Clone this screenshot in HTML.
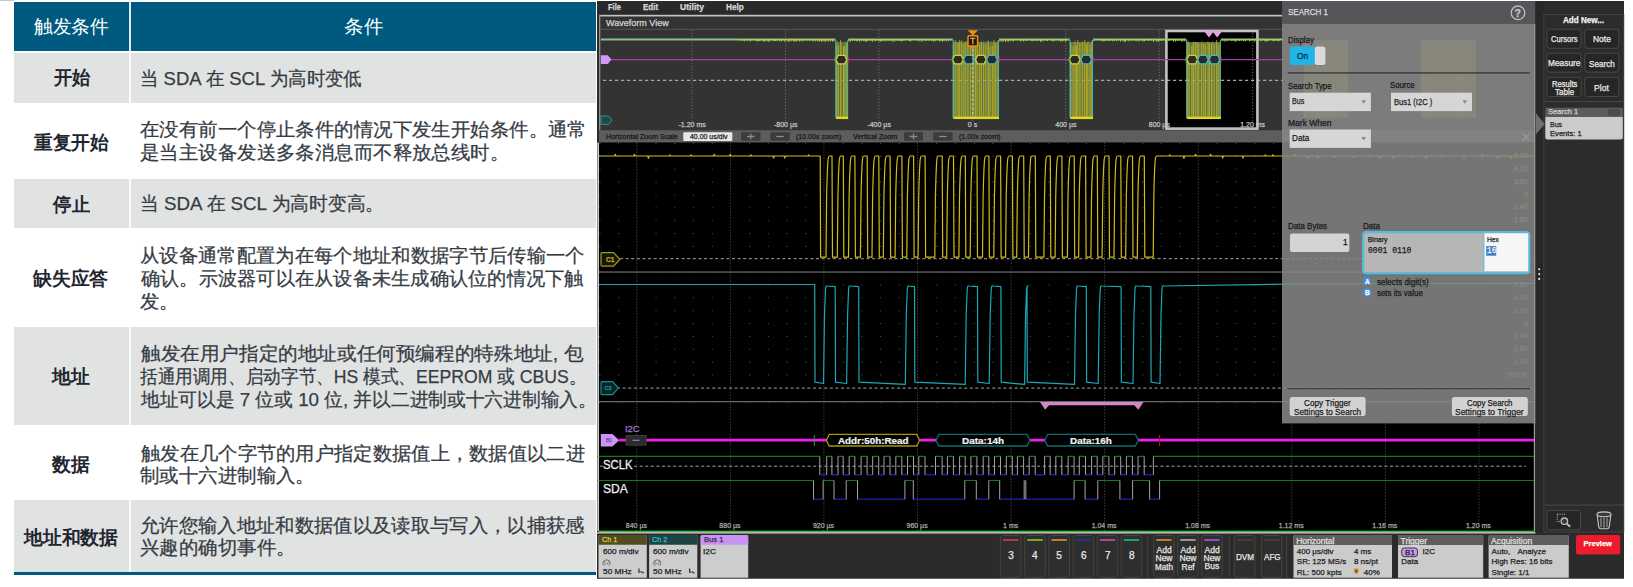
<!DOCTYPE html><html><head><meta charset="utf-8"><style>
body{margin:0;width:1633px;height:587px;overflow:hidden;background:#fff;position:relative;font-family:'Liberation Sans',sans-serif}
.a{position:absolute}
.t{position:absolute;white-space:nowrap;line-height:1;transform-origin:0 0}
.k{-webkit-text-stroke:0.25px currentColor}
svg{position:absolute;left:0;top:0}
</style></head><body>
<div class="a" style="left:0;top:0;width:13.6px;height:1px;background:#c8c8c8"></div>
<div class="a" style="left:14.4px;top:2.4px;width:581.6px;height:49.1px;background:#005a80"></div>
<div class="a" style="left:129.3px;top:2.4px;width:1.8px;height:49.1px;background:#dfe8ee"></div>
<div class="a" style="left:14.4px;top:52.5px;width:581.6px;height:50.5px;background:#e1e2e2"></div>
<div class="a" style="left:129.3px;top:52.5px;width:1.8px;height:50.5px;background:#fbfbfb"></div>
<div class="a" style="left:14.4px;top:103px;width:581.6px;height:75.6px;background:#ffffff"></div>
<div class="a" style="left:14.4px;top:178.6px;width:581.6px;height:49.400000000000006px;background:#e1e2e2"></div>
<div class="a" style="left:129.3px;top:178.6px;width:1.8px;height:49.400000000000006px;background:#fbfbfb"></div>
<div class="a" style="left:14.4px;top:228px;width:581.6px;height:99px;background:#ffffff"></div>
<div class="a" style="left:14.4px;top:327px;width:581.6px;height:98px;background:#e1e2e2"></div>
<div class="a" style="left:129.3px;top:327px;width:1.8px;height:98px;background:#fbfbfb"></div>
<div class="a" style="left:14.4px;top:425px;width:581.6px;height:75px;background:#ffffff"></div>
<div class="a" style="left:14.4px;top:500px;width:581.6px;height:71.5px;background:#e1e2e2"></div>
<div class="a" style="left:129.3px;top:500px;width:1.8px;height:71.5px;background:#fbfbfb"></div>
<div class="a" style="left:14px;top:571.5px;width:582px;height:3.6px;background:#005a80"></div>
<div class="t" style="left:139.66px;top:69.00px;font-size:19px;color:#363c44;-webkit-text-stroke:0.25px #363c44;transform:scaleX(0.9716)">当 SDA 在 SCL 为高时变低</div>
<div class="t" style="left:140.28px;top:120.40px;font-size:19px;color:#363c44;-webkit-text-stroke:0.25px #363c44;transform:scaleX(1.0224)">在没有前一个停止条件的情况下发生开始条件。通常</div>
<div class="t" style="left:140.28px;top:143.40px;font-size:19px;color:#363c44;-webkit-text-stroke:0.25px #363c44;transform:scaleX(1.0224)">是当主设备发送多条消息而不释放总线时。</div>
<div class="t" style="left:139.63px;top:193.90px;font-size:19px;color:#363c44;-webkit-text-stroke:0.25px #363c44;transform:scaleX(0.9862)">当 SDA 在 SCL 为高时变高。</div>
<div class="t" style="left:140.28px;top:245.90px;font-size:19px;color:#363c44;-webkit-text-stroke:0.25px #363c44;transform:scaleX(1.0177)">从设备通常配置为在每个地址和数据字节后传输一个</div>
<div class="t" style="left:141.30px;top:268.70px;font-size:19px;color:#363c44;-webkit-text-stroke:0.25px #363c44;transform:scaleX(1.0130)">确认。示波器可以在从设备未生成确认位的情况下触</div>
<div class="t" style="left:140.28px;top:291.60px;font-size:19px;color:#363c44;-webkit-text-stroke:0.25px #363c44;transform:scaleX(1.0224)">发。</div>
<div class="t" style="left:141.30px;top:343.80px;font-size:19px;color:#363c44;-webkit-text-stroke:0.25px #363c44;transform:scaleX(1.0319)">触发在用户指定的地址或任何预编程的特殊地址, 包</div>
<div class="t" style="left:140.37px;top:367.00px;font-size:19px;color:#363c44;-webkit-text-stroke:0.25px #363c44;transform:scaleX(0.9274)">括通用调用、启动字节、HS 模式、EEPROM 或 CBUS。</div>
<div class="t" style="left:141.30px;top:389.80px;font-size:19px;color:#363c44;-webkit-text-stroke:0.25px #363c44;transform:scaleX(0.9860)">地址可以是 7 位或 10 位, 并以二进制或十六进制输入。</div>
<div class="t" style="left:141.30px;top:443.60px;font-size:19px;color:#363c44;-webkit-text-stroke:0.25px #363c44;transform:scaleX(1.0158)">触发在几个字节的用户指定数据值上，数据值以二进</div>
<div class="t" style="left:140.28px;top:465.60px;font-size:19px;color:#363c44;-webkit-text-stroke:0.25px #363c44;transform:scaleX(1.0224)">制或十六进制输入。</div>
<div class="t" style="left:140.28px;top:515.90px;font-size:19px;color:#363c44;-webkit-text-stroke:0.25px #363c44;transform:scaleX(1.0177)">允许您输入地址和数据值以及读取与写入，以捕获感</div>
<div class="t" style="left:140.28px;top:538.20px;font-size:19px;color:#363c44;-webkit-text-stroke:0.25px #363c44;transform:scaleX(1.0224)">兴趣的确切事件。</div>
<div class="t" style="left:34.30px;top:17.40px;font-size:19px;font-weight:normal;color:#ffffff;transform:scaleX(0.9867)">触发条件</div>
<div class="t" style="left:343.97px;top:17.00px;font-size:19px;font-weight:normal;color:#ffffff;transform:scaleX(1.0278)">条件</div>
<div class="t" style="left:53.50px;top:67.90px;font-size:19px;font-weight:bold;color:#1f2630;transform:scaleX(0.9605)">开始</div>
<div class="t" style="left:34.00px;top:132.70px;font-size:19px;font-weight:bold;color:#1f2630;transform:scaleX(0.9868)">重复开始</div>
<div class="t" style="left:53.00px;top:194.50px;font-size:19px;font-weight:bold;color:#1f2630;transform:scaleX(0.9737)">停止</div>
<div class="t" style="left:33.30px;top:269.30px;font-size:19px;font-weight:bold;color:#1f2630;transform:scaleX(0.9895)">缺失应答</div>
<div class="t" style="left:51.80px;top:367.30px;font-size:19px;font-weight:bold;color:#1f2630;transform:scaleX(0.9895)">地址</div>
<div class="t" style="left:51.60px;top:455.40px;font-size:19px;font-weight:bold;color:#1f2630;transform:scaleX(0.9895)">数据</div>
<div class="t" style="left:23.90px;top:527.70px;font-size:19px;font-weight:bold;color:#1f2630;transform:scaleX(0.9905)">地址和数据</div>
<svg width="1633" height="587" viewBox="0 0 1633 587"><rect x="597" y="1" width="1027" height="577.5" fill="#2b2b2b"/><rect x="597" y="1" width="686" height="14" fill="#2a2a2a"/><rect x="599" y="14.8" width="684" height="1.9" fill="#c4c4c4"/><rect x="599" y="14.8" width="1.6" height="116" fill="#8c8c8c"/><rect x="600.6" y="16.7" width="934" height="113.5" fill="#333333"/><rect x="600.6" y="28.8" width="682" height="0.9" fill="#5c5c5c"/><rect x="1166.4" y="31" width="91" height="97.6" fill="#000"/><line x1="692.0" y1="30" x2="692.0" y2="121" stroke="#727272" stroke-width="0.9" stroke-dasharray="1.2 1.8"/><line x1="785.5" y1="30" x2="785.5" y2="121" stroke="#727272" stroke-width="0.9" stroke-dasharray="1.2 1.8"/><line x1="878.9" y1="30" x2="878.9" y2="121" stroke="#727272" stroke-width="0.9" stroke-dasharray="1.2 1.8"/><line x1="972.4" y1="30" x2="972.4" y2="121" stroke="#727272" stroke-width="0.9" stroke-dasharray="1.2 1.8"/><line x1="1065.8" y1="30" x2="1065.8" y2="121" stroke="#727272" stroke-width="0.9" stroke-dasharray="1.2 1.8"/><line x1="1159.2" y1="30" x2="1159.2" y2="121" stroke="#727272" stroke-width="0.9" stroke-dasharray="1.2 1.8"/><line x1="1252.7" y1="30" x2="1252.7" y2="121" stroke="#727272" stroke-width="0.9" stroke-dasharray="1.2 1.8"/><line x1="603" y1="80.4" x2="1283" y2="80.4" stroke="#a8a8a8" stroke-width="1.1" stroke-dasharray="3.2 2.8"/><rect x="1166.4" y="31" width="91" height="97.6" fill="none" stroke="#c2c2c2" stroke-width="2.6"/><rect x="1303.5" y="40" width="45.200000000000045" height="78" fill="#8a8430" opacity="0.7"/><path d="M1304.5 41V117 M1306.3 41V117 M1308.3 41V117 M1310.8 41V117 M1312.7 41V117 M1314.6 41V117 M1316.6 41V117 M1318.1 41V117 M1320.0 41V117 M1322.1 41V117 M1324.4 41V117 M1325.7 41V117 M1327.3 41V117 M1328.6 41V117 M1331.0 41V117 M1333.2 41V117 M1334.4 41V117 M1337.0 41V117 M1339.5 41V117 M1341.7 41V117 M1343.7 41V117 M1345.1 41V117 M1346.4 41V117" stroke="#d0c428" stroke-width="0.7" opacity="0.6"/><rect x="1421" y="40" width="55" height="78" fill="#8a8430" opacity="0.7"/><path d="M1422.0 41V117 M1423.3 41V117 M1424.7 41V117 M1426.3 41V117 M1427.5 41V117 M1429.4 41V117 M1431.2 41V117 M1433.6 41V117 M1435.5 41V117 M1437.6 41V117 M1439.5 41V117 M1441.6 41V117 M1443.5 41V117 M1445.1 41V117 M1447.7 41V117 M1450.2 41V117 M1452.6 41V117 M1454.8 41V117 M1456.5 41V117 M1458.0 41V117 M1459.6 41V117 M1460.9 41V117 M1463.2 41V117 M1464.9 41V117 M1467.3 41V117 M1469.0 41V117 M1471.6 41V117 M1474.0 41V117" stroke="#d0c428" stroke-width="0.7" opacity="0.6"/><line x1="601" y1="39.7" x2="835.4" y2="39.7" stroke="#b8b030" stroke-width="1.5"/><line x1="601" y1="39.1" x2="835.4" y2="39.1" stroke="#6cc8bc" stroke-width="1.3"/><line x1="848.1" y1="39.7" x2="952.7" y2="39.7" stroke="#b8b030" stroke-width="1.5"/><line x1="848.1" y1="39.1" x2="952.7" y2="39.1" stroke="#6cc8bc" stroke-width="1.3"/><line x1="999" y1="39.7" x2="1069.6" y2="39.7" stroke="#b8b030" stroke-width="1.5"/><line x1="999" y1="39.1" x2="1069.6" y2="39.1" stroke="#6cc8bc" stroke-width="1.3"/><line x1="1093" y1="39.7" x2="1186.3" y2="39.7" stroke="#b8b030" stroke-width="1.5"/><line x1="1093" y1="39.1" x2="1186.3" y2="39.1" stroke="#6cc8bc" stroke-width="1.3"/><line x1="1220.8" y1="39.7" x2="1283" y2="39.7" stroke="#b8b030" stroke-width="1.5"/><line x1="1220.8" y1="39.1" x2="1283" y2="39.1" stroke="#6cc8bc" stroke-width="1.3"/><path d="M739.0 39.3v1.2 M741.3 39.3v1.6 M743.6 39.3v1.5 M744.6 39.3v1.9 M746.7 39.3v1.3 M747.7 39.3v1.4 M750.1 39.3v2.2 M751.2 39.3v1.2 M752.2 39.3v0.9 M754.3 39.3v1.1 M756.1 39.3v1.6 M757.2 39.3v2.1 M758.3 39.3v2.0 M759.4 39.3v1.6 M760.6 39.3v1.3 M763.0 39.3v2.2 M764.3 39.3v2.4 M765.6 39.3v1.5 M767.7 39.3v2.0 M768.8 39.3v2.6 M770.0 39.3v1.3 M772.1 39.3v1.4 M773.4 39.3v0.9 M774.4 39.3v1.8 M775.7 39.3v1.9 M777.2 39.3v1.6 M779.5 39.3v1.7 M781.3 39.3v2.4 M782.4 39.3v1.1 M784.7 39.3v2.3 M786.0 39.3v1.1 M788.0 39.3v2.5 M789.2 39.3v2.5 M791.4 39.3v1.9 M792.9 39.3v1.0 M793.9 39.3v2.5 M795.2 39.3v2.1 M796.4 39.3v2.3 M798.2 39.3v1.3 M799.4 39.3v2.1 M800.4 39.3v1.2 M802.1 39.3v2.3 M804.0 39.3v1.3 M806.2 39.3v1.2 M807.2 39.3v1.3 M808.7 39.3v0.9 M809.9 39.3v1.5 M811.7 39.3v1.0 M813.1 39.3v2.4 M815.5 39.3v2.0 M817.4 39.3v1.9 M818.5 39.3v0.9 M819.4 39.3v2.4 M821.4 39.3v2.5 M822.3 39.3v1.9 M824.0 39.3v2.1 M825.3 39.3v2.6 M826.3 39.3v1.8 M828.3 39.3v2.4 M830.4 39.3v2.1 M832.4 39.3v2.4 M833.9 39.3v2.0 M849.0 39.3v2.4 M850.5 39.3v2.2 M852.7 39.3v1.8 M854.6 39.3v1.5 M856.3 39.3v1.9 M857.4 39.3v2.0 M859.7 39.3v2.4 M861.7 39.3v1.5 M863.7 39.3v1.8 M865.3 39.3v2.3 M866.3 39.3v2.2 M867.3 39.3v1.9 M868.9 39.3v1.2 M870.8 39.3v1.7 M872.7 39.3v2.5 M873.9 39.3v0.8 M875.3 39.3v2.0 M876.5 39.3v1.1 M878.8 39.3v2.0 M880.3 39.3v2.4 M881.7 39.3v2.0 M882.9 39.3v1.6 M885.0 39.3v2.4 M887.2 39.3v1.5 M889.0 39.3v1.4 M890.1 39.3v1.7 M892.3 39.3v2.3 M894.2 39.3v2.5 M895.6 39.3v1.1 M897.1 39.3v1.3 M898.4 39.3v1.5 M900.2 39.3v1.7 M901.6 39.3v2.3 M903.9 39.3v1.6 M904.9 39.3v0.9 M907.2 39.3v0.9 M909.1 39.3v1.8 M910.5 39.3v2.2 M911.4 39.3v1.0 M913.0 39.3v0.8 M915.1 39.3v1.2 M916.3 39.3v0.9 M918.1 39.3v1.6 M919.9 39.3v2.0 M922.1 39.3v2.5 M924.0 39.3v1.2 M925.6 39.3v1.1 M926.5 39.3v1.6 M928.5 39.3v1.1 M929.8 39.3v1.4 M931.7 39.3v1.7 M933.6 39.3v2.2 M935.0 39.3v2.2 M937.3 39.3v1.0 M939.6 39.3v2.1 M940.7 39.3v1.6 M942.5 39.3v2.4 M944.0 39.3v1.8 M946.2 39.3v2.2 M948.5 39.3v1.6 M950.4 39.3v1.2 M1000.0 39.3v2.3 M1001.9 39.3v2.1 M1003.1 39.3v2.4 M1005.5 39.3v2.6 M1007.2 39.3v2.2 M1008.5 39.3v2.4 M1010.7 39.3v1.4 M1011.7 39.3v1.6 M1013.5 39.3v2.2 M1015.1 39.3v0.9 M1017.2 39.3v0.9 M1019.3 39.3v1.1 M1020.7 39.3v2.2 M1021.8 39.3v1.1 M1023.5 39.3v2.1 M1025.7 39.3v2.0 M1028.0 39.3v1.7 M1030.3 39.3v1.0 M1031.5 39.3v1.7 M1032.9 39.3v2.1 M1034.7 39.3v1.7 M1036.9 39.3v1.8 M1038.3 39.3v1.5 M1040.4 39.3v2.4 M1041.6 39.3v2.3 M1044.0 39.3v1.7 M1045.8 39.3v1.2 M1047.5 39.3v1.7 M1049.3 39.3v0.8 M1051.6 39.3v1.7 M1053.1 39.3v2.2 M1054.9 39.3v1.7 M1056.8 39.3v0.9 M1058.5 39.3v1.5 M1060.8 39.3v2.5 M1062.2 39.3v1.7 M1063.2 39.3v1.6 M1065.4 39.3v2.4 M1067.0 39.3v1.4 M1094.0 39.3v1.9 M1096.3 39.3v1.0 M1098.4 39.3v0.8 M1099.5 39.3v1.2 M1101.5 39.3v1.4 M1102.9 39.3v1.9 M1104.0 39.3v2.1 M1105.1 39.3v1.7 M1106.3 39.3v1.2 M1108.0 39.3v1.6 M1109.5 39.3v1.5 M1111.2 39.3v1.1 M1112.4 39.3v1.9 M1114.2 39.3v1.8 M1116.4 39.3v1.9 M1118.6 39.3v1.2 M1120.6 39.3v2.3 M1122.9 39.3v1.4 M1124.2 39.3v2.5 M1125.5 39.3v2.6 M1127.7 39.3v1.0 M1129.0 39.3v2.1 M1130.3 39.3v1.0 M1132.4 39.3v1.6 M1134.5 39.3v1.0 M1136.0 39.3v2.0 M1136.9 39.3v1.2 M1138.8 39.3v2.4 M1141.2 39.3v1.0 M1142.9 39.3v2.2 M1144.5 39.3v2.0 M1145.7 39.3v0.9 M1146.7 39.3v0.9 M1148.5 39.3v1.7 M1150.2 39.3v1.1 M1151.4 39.3v1.2 M1153.6 39.3v2.6 M1155.9 39.3v1.0 M1156.8 39.3v2.5 M1158.4 39.3v2.2 M1159.8 39.3v1.6 M1161.5 39.3v1.6 M1163.3 39.3v0.8 M1165.3 39.3v2.3 M1166.4 39.3v1.6 M1168.4 39.3v1.5 M1169.6 39.3v1.1 M1171.3 39.3v0.8 M1173.5 39.3v2.2 M1175.5 39.3v2.3 M1177.3 39.3v1.5 M1179.1 39.3v1.7 M1181.5 39.3v2.2 M1182.8 39.3v2.4 M1184.8 39.3v2.2 M1222.0 39.3v1.5 M1224.2 39.3v2.4 M1226.2 39.3v2.2 M1228.2 39.3v1.5 M1230.2 39.3v0.9 M1231.6 39.3v1.6 M1232.5 39.3v1.4 M1234.4 39.3v1.9 M1235.7 39.3v2.5 M1237.6 39.3v1.4 M1239.4 39.3v1.8 M1241.1 39.3v1.5 M1243.5 39.3v2.0 M1245.5 39.3v2.2 M1247.9 39.3v0.8 M1249.7 39.3v2.1 M1251.0 39.3v1.5 M1251.9 39.3v1.2 M1253.4 39.3v1.0 M1254.7 39.3v2.4 M1256.4 39.3v1.7 M1258.8 39.3v1.8 M1261.2 39.3v1.9 M1263.3 39.3v0.9 M1265.1 39.3v2.2 M1266.0 39.3v2.5 M1267.2 39.3v1.6 M1268.3 39.3v1.7 M1270.1 39.3v0.9 M1272.5 39.3v1.6 M1274.2 39.3v1.9 M1275.6 39.3v1.3 M1277.5 39.3v1.8 M1278.8 39.3v2.1 M1280.2 39.3v0.8 M1281.4 39.3v0.9" stroke="#e8dc18" stroke-width="0.8" fill="none"/><rect x="835.4" y="42" width="12.700000000000045" height="76.8" fill="#6c7030"/><path d="M836.4 44.8V117 M838.3 45.8V117 M840.7 39.9V117 M843.5 46.1V117 M844.9 45.8V117 M846.8 42.8V117" stroke="#d0c01c" stroke-width="1.0" fill="none" opacity="0.75"/><path d="M837.4 40.5V116 M841.2 43.2V116 M845.5 41.4V116" stroke="#5cb8b0" stroke-width="0.7" fill="none" opacity="0.55"/><path d="M833.9 39.3Q835.6 39.3 835.9 41V117.8Q836.4 119 838.4 118.6H847.6V41Q848.1 39.3 850.1 39.1" stroke="#4ab8b4" stroke-width="1.0" fill="none"/><rect x="836.4" y="116.6" width="11.700000000000045" height="2.4" fill="#e4d818"/><line x1="835.4" y1="80.4" x2="848.1" y2="80.4" stroke="#b8b8b8" stroke-width="1" stroke-dasharray="3.2 2.8" opacity="0.6"/><rect x="952.7" y="42" width="46.299999999999955" height="76.8" fill="#6c7030"/><path d="M953.7 45.2V117 M955.9 40.3V117 M958.1 42.7V117 M959.7 39.9V117 M961.8 40.4V117 M963.8 44.2V117 M965.8 41.3V117 M968.0 42.4V117 M970.4 43.2V117 M973.2 46.2V117 M975.6 41.2V117 M977.1 45.7V117 M979.6 43.9V117 M981.4 41.4V117 M983.7 43.5V117 M985.9 43.9V117 M988.4 40.8V117 M990.0 46.4V117 M992.7 45.7V117 M994.1 39.9V117 M995.8 42.5V117 M998.0 40.2V117" stroke="#d0c01c" stroke-width="1.0" fill="none" opacity="0.75"/><path d="M954.7 39.8V116 M957.4 42.2V116 M961.3 42.0V116 M964.7 41.4V116 M967.8 40.9V116 M972.1 42.9V116 M974.8 40.0V116 M979.3 42.0V116 M983.7 40.4V116 M987.3 40.5V116 M991.8 41.0V116 M996.0 43.5V116" stroke="#5cb8b0" stroke-width="0.7" fill="none" opacity="0.55"/><path d="M951.2 39.3Q952.9000000000001 39.3 953.2 41V117.8Q953.7 119 955.7 118.6H998.5V41Q999 39.3 1001 39.1" stroke="#4ab8b4" stroke-width="1.0" fill="none"/><rect x="953.7" y="116.6" width="45.299999999999955" height="2.4" fill="#e4d818"/><line x1="952.7" y1="80.4" x2="999" y2="80.4" stroke="#b8b8b8" stroke-width="1" stroke-dasharray="3.2 2.8" opacity="0.6"/><rect x="1069.6" y="42" width="23.40000000000009" height="76.8" fill="#6c7030"/><path d="M1070.6 43.3V117 M1073.0 45.9V117 M1075.0 42.1V117 M1076.4 45.6V117 M1077.8 40.1V117 M1080.0 42.9V117 M1082.3 41.6V117 M1084.8 40.0V117 M1086.4 44.1V117 M1087.8 41.6V117 M1090.2 44.4V117 M1091.9 40.5V117" stroke="#d0c01c" stroke-width="1.0" fill="none" opacity="0.75"/><path d="M1071.6 42.4V116 M1075.0 40.0V116 M1079.3 41.8V116 M1084.1 43.3V116 M1088.9 41.3V116" stroke="#5cb8b0" stroke-width="0.7" fill="none" opacity="0.55"/><path d="M1068.1 39.3Q1069.8 39.3 1070.1 41V117.8Q1070.6 119 1072.6 118.6H1092.5V41Q1093 39.3 1095 39.1" stroke="#4ab8b4" stroke-width="1.0" fill="none"/><rect x="1070.6" y="116.6" width="22.40000000000009" height="2.4" fill="#e4d818"/><line x1="1069.6" y1="80.4" x2="1093" y2="80.4" stroke="#b8b8b8" stroke-width="1" stroke-dasharray="3.2 2.8" opacity="0.6"/><rect x="1186.3" y="42" width="34.5" height="76.8" fill="#6c7030"/><path d="M1187.3 41.6V117 M1189.1 42.3V117 M1191.8 45.8V117 M1193.5 42.0V117 M1195.3 42.0V117 M1197.2 42.2V117 M1198.8 43.4V117 M1201.3 43.3V117 M1203.8 43.4V117 M1205.4 44.8V117 M1208.0 41.5V117 M1209.4 43.1V117 M1211.5 43.5V117 M1214.2 44.1V117 M1216.7 39.9V117 M1218.8 45.0V117" stroke="#d0c01c" stroke-width="1.0" fill="none" opacity="0.75"/><path d="M1188.3 39.8V116 M1192.6 43.1V116 M1195.4 42.0V116 M1198.2 42.5V116 M1202.3 40.5V116 M1205.4 42.6V116 M1209.2 42.6V116 M1212.7 40.9V116 M1217.6 42.2V116" stroke="#5cb8b0" stroke-width="0.7" fill="none" opacity="0.55"/><path d="M1184.8 39.3Q1186.5 39.3 1186.8 41V117.8Q1187.3 119 1189.3 118.6H1220.3V41Q1220.8 39.3 1222.8 39.1" stroke="#4ab8b4" stroke-width="1.0" fill="none"/><rect x="1187.3" y="116.6" width="33.5" height="2.4" fill="#e4d818"/><line x1="1186.3" y1="80.4" x2="1220.8" y2="80.4" stroke="#b8b8b8" stroke-width="1" stroke-dasharray="3.2 2.8" opacity="0.6"/><line x1="611" y1="59.6" x2="1283" y2="59.6" stroke="#a83cb0" stroke-width="1.3"/><path d="M836.0 59.6 L838.1 55.4 H844.6999999999999 L846.8 59.6 L844.6999999999999 63.8 H838.1 Z" fill="#2a2a2a" stroke="#d8cc30" stroke-width="1.3"/><path d="M952.5 59.6 L954.6 55.4 H961.1999999999999 L963.3 59.6 L961.1999999999999 63.8 H954.6 Z" fill="#2a2a2a" stroke="#d8cc30" stroke-width="1.3"/><path d="M963.5 59.6 L965.6 55.4 H972.1999999999999 L974.3 59.6 L972.1999999999999 63.8 H965.6 Z" fill="#2a2a2a" stroke="#38bcd0" stroke-width="1.3"/><path d="M975.5 59.6 L977.6 55.4 H984.1999999999999 L986.3 59.6 L984.1999999999999 63.8 H977.6 Z" fill="#2a2a2a" stroke="#d8cc30" stroke-width="1.3"/><path d="M986.5 59.6 L988.6 55.4 H995.1999999999999 L997.3 59.6 L995.1999999999999 63.8 H988.6 Z" fill="#2a2a2a" stroke="#38bcd0" stroke-width="1.3"/><path d="M1069.3 59.6 L1071.4 55.4 H1078.0 L1080.1000000000001 59.6 L1078.0 63.8 H1071.4 Z" fill="#2a2a2a" stroke="#d8cc30" stroke-width="1.3"/><path d="M1080.8 59.6 L1082.9 55.4 H1089.5 L1091.6000000000001 59.6 L1089.5 63.8 H1082.9 Z" fill="#2a2a2a" stroke="#38bcd0" stroke-width="1.3"/><path d="M1186.8 59.6 L1188.9 55.4 H1195.5 L1197.6000000000001 59.6 L1195.5 63.8 H1188.9 Z" fill="#2a2a2a" stroke="#d8cc30" stroke-width="1.3"/><path d="M1197.5 59.6 L1199.6000000000001 55.4 H1206.2 L1208.3000000000002 59.6 L1206.2 63.8 H1199.6000000000001 Z" fill="#2a2a2a" stroke="#38bcd0" stroke-width="1.3"/><path d="M1209.0 59.6 L1211.1000000000001 55.4 H1217.7 L1219.8000000000002 59.6 L1217.7 63.8 H1211.1000000000001 Z" fill="#2a2a2a" stroke="#38bcd0" stroke-width="1.3"/><path d="M835.1 56.5V62.5" stroke="#30c040" stroke-width="0.9"/><path d="M848.4 56.5V62.5" stroke="#d03030" stroke-width="0.9"/><path d="M952.4000000000001 56.5V62.5" stroke="#30c040" stroke-width="0.9"/><path d="M999.3 56.5V62.5" stroke="#d03030" stroke-width="0.9"/><path d="M1069.3 56.5V62.5" stroke="#30c040" stroke-width="0.9"/><path d="M1093.3 56.5V62.5" stroke="#d03030" stroke-width="0.9"/><path d="M1186.0 56.5V62.5" stroke="#30c040" stroke-width="0.9"/><path d="M1221.1 56.5V62.5" stroke="#d03030" stroke-width="0.9"/><path d="M600.8 55.3 H607.8 L611.5 59.6 L607.8 63.9 H600.8 Z" fill="#d498f4"/><path d="M600.8 116 H608.5 L612.2 120.2 L608.5 124.4 H600.8 Z" fill="#1c4c4c" stroke="#3ca4a4" stroke-width="0.8"/><path d="M967.6 30.2 H978 L972.8 35.4 Z" fill="#f08c14"/><rect x="968" y="35.8" width="9.6" height="10.2" rx="1" fill="#1a1a1a" stroke="#f08c14" stroke-width="1.5"/><path d="M970.4 46.5 L972.8 49.2 L975.2 46.5Z" fill="#f08c14"/><path d="M970.2 38.3H975.4M972.8 38.3V44.3" stroke="#f0a030" stroke-width="1.3"/><line x1="972.8" y1="49" x2="972.8" y2="118" stroke="#d8d8d8" stroke-width="0.9" stroke-dasharray="2.5 2"/><path d="M1203.6 30.6 H1214.4 L1209 37.6 Z" fill="#e4a4dc"/><path d="M1211.8 30.6 H1222.6 L1217.2 37.6 Z" fill="#e4a4dc"/><rect x="599" y="130.2" width="936" height="12.4" fill="#5d5d5d"/><rect x="683.3" y="132.2" width="49" height="8.8" rx="0.8" fill="#e8e8e8"/><rect x="741.1" y="132.2" width="19.4" height="8.6" rx="1" fill="#3c3c3c"/><path d="M747.0 136.5H754.6M750.8 133.4V139.6" stroke="#8c8c8c" stroke-width="1.3"/><rect x="770.3" y="132.2" width="19.4" height="8.6" rx="1" fill="#3c3c3c"/><path d="M776.2 136.5H783.8" stroke="#8c8c8c" stroke-width="1.3"/><rect x="904" y="132.2" width="19.0" height="8.6" rx="1" fill="#3c3c3c"/><path d="M909.7 136.5H917.3M913.5 133.4V139.6" stroke="#8c8c8c" stroke-width="1.3"/><rect x="933.2" y="132.2" width="19.4" height="8.6" rx="1" fill="#3c3c3c"/><path d="M939.1 136.5H946.7" stroke="#8c8c8c" stroke-width="1.3"/><rect x="598.6" y="142.6" width="935.6" height="388.4" fill="#000"/><rect x="597.4" y="142.6" width="1.6" height="388.4" fill="#cfcfcf"/><line x1="636.8" y1="142.6" x2="636.8" y2="531.0" stroke="#5a5a5a" stroke-width="0.9" stroke-dasharray="1.1 1.9"/><line x1="730.4" y1="142.6" x2="730.4" y2="531.0" stroke="#5a5a5a" stroke-width="0.9" stroke-dasharray="1.1 1.9"/><line x1="823.9" y1="142.6" x2="823.9" y2="531.0" stroke="#5a5a5a" stroke-width="0.9" stroke-dasharray="1.1 1.9"/><line x1="917.5" y1="142.6" x2="917.5" y2="531.0" stroke="#5a5a5a" stroke-width="0.9" stroke-dasharray="1.1 1.9"/><line x1="1011.1" y1="142.6" x2="1011.1" y2="531.0" stroke="#5a5a5a" stroke-width="0.9" stroke-dasharray="1.1 1.9"/><line x1="1104.6" y1="142.6" x2="1104.6" y2="531.0" stroke="#5a5a5a" stroke-width="0.9" stroke-dasharray="1.1 1.9"/><line x1="1198.2" y1="142.6" x2="1198.2" y2="531.0" stroke="#5a5a5a" stroke-width="0.9" stroke-dasharray="1.1 1.9"/><line x1="1291.8" y1="423.5" x2="1291.8" y2="531.0" stroke="#5a5a5a" stroke-width="0.9" stroke-dasharray="1.1 1.9"/><line x1="1385.4" y1="423.5" x2="1385.4" y2="531.0" stroke="#5a5a5a" stroke-width="0.9" stroke-dasharray="1.1 1.9"/><line x1="1478.9" y1="423.5" x2="1478.9" y2="531.0" stroke="#5a5a5a" stroke-width="0.9" stroke-dasharray="1.1 1.9"/><path d="M599.4 143.6h1.1 M618.1 143.6h1.1 M655.5 143.6h1.1 M674.2 143.6h1.1 M692.9 143.6h1.1 M711.7 143.6h1.1 M749.1 143.6h1.1 M767.8 143.6h1.1 M786.5 143.6h1.1 M805.2 143.6h1.1 M842.7 143.6h1.1 M861.4 143.6h1.1 M880.1 143.6h1.1 M898.8 143.6h1.1 M936.2 143.6h1.1 M954.9 143.6h1.1 M973.7 143.6h1.1 M992.4 143.6h1.1 M1029.8 143.6h1.1 M1048.5 143.6h1.1 M1067.2 143.6h1.1 M1085.9 143.6h1.1 M1123.4 143.6h1.1 M1142.1 143.6h1.1 M1160.8 143.6h1.1 M1179.5 143.6h1.1 M1216.9 143.6h1.1 M1235.6 143.6h1.1 M1254.4 143.6h1.1 M1273.1 143.6h1.1 M599.4 156.4h1.1 M618.1 156.4h1.1 M655.5 156.4h1.1 M674.2 156.4h1.1 M692.9 156.4h1.1 M711.7 156.4h1.1 M749.1 156.4h1.1 M767.8 156.4h1.1 M786.5 156.4h1.1 M805.2 156.4h1.1 M842.7 156.4h1.1 M861.4 156.4h1.1 M880.1 156.4h1.1 M898.8 156.4h1.1 M936.2 156.4h1.1 M954.9 156.4h1.1 M973.7 156.4h1.1 M992.4 156.4h1.1 M1029.8 156.4h1.1 M1048.5 156.4h1.1 M1067.2 156.4h1.1 M1085.9 156.4h1.1 M1123.4 156.4h1.1 M1142.1 156.4h1.1 M1160.8 156.4h1.1 M1179.5 156.4h1.1 M1216.9 156.4h1.1 M1235.6 156.4h1.1 M1254.4 156.4h1.1 M1273.1 156.4h1.1 M599.4 169.3h1.1 M618.1 169.3h1.1 M655.5 169.3h1.1 M674.2 169.3h1.1 M692.9 169.3h1.1 M711.7 169.3h1.1 M749.1 169.3h1.1 M767.8 169.3h1.1 M786.5 169.3h1.1 M805.2 169.3h1.1 M842.7 169.3h1.1 M861.4 169.3h1.1 M880.1 169.3h1.1 M898.8 169.3h1.1 M936.2 169.3h1.1 M954.9 169.3h1.1 M973.7 169.3h1.1 M992.4 169.3h1.1 M1029.8 169.3h1.1 M1048.5 169.3h1.1 M1067.2 169.3h1.1 M1085.9 169.3h1.1 M1123.4 169.3h1.1 M1142.1 169.3h1.1 M1160.8 169.3h1.1 M1179.5 169.3h1.1 M1216.9 169.3h1.1 M1235.6 169.3h1.1 M1254.4 169.3h1.1 M1273.1 169.3h1.1 M599.4 182.1h1.1 M618.1 182.1h1.1 M655.5 182.1h1.1 M674.2 182.1h1.1 M692.9 182.1h1.1 M711.7 182.1h1.1 M749.1 182.1h1.1 M767.8 182.1h1.1 M786.5 182.1h1.1 M805.2 182.1h1.1 M842.7 182.1h1.1 M861.4 182.1h1.1 M880.1 182.1h1.1 M898.8 182.1h1.1 M936.2 182.1h1.1 M954.9 182.1h1.1 M973.7 182.1h1.1 M992.4 182.1h1.1 M1029.8 182.1h1.1 M1048.5 182.1h1.1 M1067.2 182.1h1.1 M1085.9 182.1h1.1 M1123.4 182.1h1.1 M1142.1 182.1h1.1 M1160.8 182.1h1.1 M1179.5 182.1h1.1 M1216.9 182.1h1.1 M1235.6 182.1h1.1 M1254.4 182.1h1.1 M1273.1 182.1h1.1 M599.4 195.0h1.1 M618.1 195.0h1.1 M655.5 195.0h1.1 M674.2 195.0h1.1 M692.9 195.0h1.1 M711.7 195.0h1.1 M749.1 195.0h1.1 M767.8 195.0h1.1 M786.5 195.0h1.1 M805.2 195.0h1.1 M842.7 195.0h1.1 M861.4 195.0h1.1 M880.1 195.0h1.1 M898.8 195.0h1.1 M936.2 195.0h1.1 M954.9 195.0h1.1 M973.7 195.0h1.1 M992.4 195.0h1.1 M1029.8 195.0h1.1 M1048.5 195.0h1.1 M1067.2 195.0h1.1 M1085.9 195.0h1.1 M1123.4 195.0h1.1 M1142.1 195.0h1.1 M1160.8 195.0h1.1 M1179.5 195.0h1.1 M1216.9 195.0h1.1 M1235.6 195.0h1.1 M1254.4 195.0h1.1 M1273.1 195.0h1.1 M599.4 207.8h1.1 M618.1 207.8h1.1 M655.5 207.8h1.1 M674.2 207.8h1.1 M692.9 207.8h1.1 M711.7 207.8h1.1 M749.1 207.8h1.1 M767.8 207.8h1.1 M786.5 207.8h1.1 M805.2 207.8h1.1 M842.7 207.8h1.1 M861.4 207.8h1.1 M880.1 207.8h1.1 M898.8 207.8h1.1 M936.2 207.8h1.1 M954.9 207.8h1.1 M973.7 207.8h1.1 M992.4 207.8h1.1 M1029.8 207.8h1.1 M1048.5 207.8h1.1 M1067.2 207.8h1.1 M1085.9 207.8h1.1 M1123.4 207.8h1.1 M1142.1 207.8h1.1 M1160.8 207.8h1.1 M1179.5 207.8h1.1 M1216.9 207.8h1.1 M1235.6 207.8h1.1 M1254.4 207.8h1.1 M1273.1 207.8h1.1 M599.4 220.7h1.1 M618.1 220.7h1.1 M655.5 220.7h1.1 M674.2 220.7h1.1 M692.9 220.7h1.1 M711.7 220.7h1.1 M749.1 220.7h1.1 M767.8 220.7h1.1 M786.5 220.7h1.1 M805.2 220.7h1.1 M842.7 220.7h1.1 M861.4 220.7h1.1 M880.1 220.7h1.1 M898.8 220.7h1.1 M936.2 220.7h1.1 M954.9 220.7h1.1 M973.7 220.7h1.1 M992.4 220.7h1.1 M1029.8 220.7h1.1 M1048.5 220.7h1.1 M1067.2 220.7h1.1 M1085.9 220.7h1.1 M1123.4 220.7h1.1 M1142.1 220.7h1.1 M1160.8 220.7h1.1 M1179.5 220.7h1.1 M1216.9 220.7h1.1 M1235.6 220.7h1.1 M1254.4 220.7h1.1 M1273.1 220.7h1.1 M599.4 233.6h1.1 M618.1 233.6h1.1 M655.5 233.6h1.1 M674.2 233.6h1.1 M692.9 233.6h1.1 M711.7 233.6h1.1 M749.1 233.6h1.1 M767.8 233.6h1.1 M786.5 233.6h1.1 M805.2 233.6h1.1 M842.7 233.6h1.1 M861.4 233.6h1.1 M880.1 233.6h1.1 M898.8 233.6h1.1 M936.2 233.6h1.1 M954.9 233.6h1.1 M973.7 233.6h1.1 M992.4 233.6h1.1 M1029.8 233.6h1.1 M1048.5 233.6h1.1 M1067.2 233.6h1.1 M1085.9 233.6h1.1 M1123.4 233.6h1.1 M1142.1 233.6h1.1 M1160.8 233.6h1.1 M1179.5 233.6h1.1 M1216.9 233.6h1.1 M1235.6 233.6h1.1 M1254.4 233.6h1.1 M1273.1 233.6h1.1 M599.4 246.4h1.1 M618.1 246.4h1.1 M655.5 246.4h1.1 M674.2 246.4h1.1 M692.9 246.4h1.1 M711.7 246.4h1.1 M749.1 246.4h1.1 M767.8 246.4h1.1 M786.5 246.4h1.1 M805.2 246.4h1.1 M842.7 246.4h1.1 M861.4 246.4h1.1 M880.1 246.4h1.1 M898.8 246.4h1.1 M936.2 246.4h1.1 M954.9 246.4h1.1 M973.7 246.4h1.1 M992.4 246.4h1.1 M1029.8 246.4h1.1 M1048.5 246.4h1.1 M1067.2 246.4h1.1 M1085.9 246.4h1.1 M1123.4 246.4h1.1 M1142.1 246.4h1.1 M1160.8 246.4h1.1 M1179.5 246.4h1.1 M1216.9 246.4h1.1 M1235.6 246.4h1.1 M1254.4 246.4h1.1 M1273.1 246.4h1.1 M599.4 272.1h1.1 M618.1 272.1h1.1 M655.5 272.1h1.1 M674.2 272.1h1.1 M692.9 272.1h1.1 M711.7 272.1h1.1 M749.1 272.1h1.1 M767.8 272.1h1.1 M786.5 272.1h1.1 M805.2 272.1h1.1 M842.7 272.1h1.1 M861.4 272.1h1.1 M880.1 272.1h1.1 M898.8 272.1h1.1 M936.2 272.1h1.1 M954.9 272.1h1.1 M973.7 272.1h1.1 M992.4 272.1h1.1 M1029.8 272.1h1.1 M1048.5 272.1h1.1 M1067.2 272.1h1.1 M1085.9 272.1h1.1 M1123.4 272.1h1.1 M1142.1 272.1h1.1 M1160.8 272.1h1.1 M1179.5 272.1h1.1 M1216.9 272.1h1.1 M1235.6 272.1h1.1 M1254.4 272.1h1.1 M1273.1 272.1h1.1 M599.4 285.0h1.1 M618.1 285.0h1.1 M655.5 285.0h1.1 M674.2 285.0h1.1 M692.9 285.0h1.1 M711.7 285.0h1.1 M749.1 285.0h1.1 M767.8 285.0h1.1 M786.5 285.0h1.1 M805.2 285.0h1.1 M842.7 285.0h1.1 M861.4 285.0h1.1 M880.1 285.0h1.1 M898.8 285.0h1.1 M936.2 285.0h1.1 M954.9 285.0h1.1 M973.7 285.0h1.1 M992.4 285.0h1.1 M1029.8 285.0h1.1 M1048.5 285.0h1.1 M1067.2 285.0h1.1 M1085.9 285.0h1.1 M1123.4 285.0h1.1 M1142.1 285.0h1.1 M1160.8 285.0h1.1 M1179.5 285.0h1.1 M1216.9 285.0h1.1 M1235.6 285.0h1.1 M1254.4 285.0h1.1 M1273.1 285.0h1.1 M599.4 297.8h1.1 M618.1 297.8h1.1 M655.5 297.8h1.1 M674.2 297.8h1.1 M692.9 297.8h1.1 M711.7 297.8h1.1 M749.1 297.8h1.1 M767.8 297.8h1.1 M786.5 297.8h1.1 M805.2 297.8h1.1 M842.7 297.8h1.1 M861.4 297.8h1.1 M880.1 297.8h1.1 M898.8 297.8h1.1 M936.2 297.8h1.1 M954.9 297.8h1.1 M973.7 297.8h1.1 M992.4 297.8h1.1 M1029.8 297.8h1.1 M1048.5 297.8h1.1 M1067.2 297.8h1.1 M1085.9 297.8h1.1 M1123.4 297.8h1.1 M1142.1 297.8h1.1 M1160.8 297.8h1.1 M1179.5 297.8h1.1 M1216.9 297.8h1.1 M1235.6 297.8h1.1 M1254.4 297.8h1.1 M1273.1 297.8h1.1 M599.4 310.7h1.1 M618.1 310.7h1.1 M655.5 310.7h1.1 M674.2 310.7h1.1 M692.9 310.7h1.1 M711.7 310.7h1.1 M749.1 310.7h1.1 M767.8 310.7h1.1 M786.5 310.7h1.1 M805.2 310.7h1.1 M842.7 310.7h1.1 M861.4 310.7h1.1 M880.1 310.7h1.1 M898.8 310.7h1.1 M936.2 310.7h1.1 M954.9 310.7h1.1 M973.7 310.7h1.1 M992.4 310.7h1.1 M1029.8 310.7h1.1 M1048.5 310.7h1.1 M1067.2 310.7h1.1 M1085.9 310.7h1.1 M1123.4 310.7h1.1 M1142.1 310.7h1.1 M1160.8 310.7h1.1 M1179.5 310.7h1.1 M1216.9 310.7h1.1 M1235.6 310.7h1.1 M1254.4 310.7h1.1 M1273.1 310.7h1.1 M599.4 323.5h1.1 M618.1 323.5h1.1 M655.5 323.5h1.1 M674.2 323.5h1.1 M692.9 323.5h1.1 M711.7 323.5h1.1 M749.1 323.5h1.1 M767.8 323.5h1.1 M786.5 323.5h1.1 M805.2 323.5h1.1 M842.7 323.5h1.1 M861.4 323.5h1.1 M880.1 323.5h1.1 M898.8 323.5h1.1 M936.2 323.5h1.1 M954.9 323.5h1.1 M973.7 323.5h1.1 M992.4 323.5h1.1 M1029.8 323.5h1.1 M1048.5 323.5h1.1 M1067.2 323.5h1.1 M1085.9 323.5h1.1 M1123.4 323.5h1.1 M1142.1 323.5h1.1 M1160.8 323.5h1.1 M1179.5 323.5h1.1 M1216.9 323.5h1.1 M1235.6 323.5h1.1 M1254.4 323.5h1.1 M1273.1 323.5h1.1 M599.4 336.4h1.1 M618.1 336.4h1.1 M655.5 336.4h1.1 M674.2 336.4h1.1 M692.9 336.4h1.1 M711.7 336.4h1.1 M749.1 336.4h1.1 M767.8 336.4h1.1 M786.5 336.4h1.1 M805.2 336.4h1.1 M842.7 336.4h1.1 M861.4 336.4h1.1 M880.1 336.4h1.1 M898.8 336.4h1.1 M936.2 336.4h1.1 M954.9 336.4h1.1 M973.7 336.4h1.1 M992.4 336.4h1.1 M1029.8 336.4h1.1 M1048.5 336.4h1.1 M1067.2 336.4h1.1 M1085.9 336.4h1.1 M1123.4 336.4h1.1 M1142.1 336.4h1.1 M1160.8 336.4h1.1 M1179.5 336.4h1.1 M1216.9 336.4h1.1 M1235.6 336.4h1.1 M1254.4 336.4h1.1 M1273.1 336.4h1.1 M599.4 349.2h1.1 M618.1 349.2h1.1 M655.5 349.2h1.1 M674.2 349.2h1.1 M692.9 349.2h1.1 M711.7 349.2h1.1 M749.1 349.2h1.1 M767.8 349.2h1.1 M786.5 349.2h1.1 M805.2 349.2h1.1 M842.7 349.2h1.1 M861.4 349.2h1.1 M880.1 349.2h1.1 M898.8 349.2h1.1 M936.2 349.2h1.1 M954.9 349.2h1.1 M973.7 349.2h1.1 M992.4 349.2h1.1 M1029.8 349.2h1.1 M1048.5 349.2h1.1 M1067.2 349.2h1.1 M1085.9 349.2h1.1 M1123.4 349.2h1.1 M1142.1 349.2h1.1 M1160.8 349.2h1.1 M1179.5 349.2h1.1 M1216.9 349.2h1.1 M1235.6 349.2h1.1 M1254.4 349.2h1.1 M1273.1 349.2h1.1 M599.4 362.1h1.1 M618.1 362.1h1.1 M655.5 362.1h1.1 M674.2 362.1h1.1 M692.9 362.1h1.1 M711.7 362.1h1.1 M749.1 362.1h1.1 M767.8 362.1h1.1 M786.5 362.1h1.1 M805.2 362.1h1.1 M842.7 362.1h1.1 M861.4 362.1h1.1 M880.1 362.1h1.1 M898.8 362.1h1.1 M936.2 362.1h1.1 M954.9 362.1h1.1 M973.7 362.1h1.1 M992.4 362.1h1.1 M1029.8 362.1h1.1 M1048.5 362.1h1.1 M1067.2 362.1h1.1 M1085.9 362.1h1.1 M1123.4 362.1h1.1 M1142.1 362.1h1.1 M1160.8 362.1h1.1 M1179.5 362.1h1.1 M1216.9 362.1h1.1 M1235.6 362.1h1.1 M1254.4 362.1h1.1 M1273.1 362.1h1.1 M599.4 374.9h1.1 M618.1 374.9h1.1 M655.5 374.9h1.1 M674.2 374.9h1.1 M692.9 374.9h1.1 M711.7 374.9h1.1 M749.1 374.9h1.1 M767.8 374.9h1.1 M786.5 374.9h1.1 M805.2 374.9h1.1 M842.7 374.9h1.1 M861.4 374.9h1.1 M880.1 374.9h1.1 M898.8 374.9h1.1 M936.2 374.9h1.1 M954.9 374.9h1.1 M973.7 374.9h1.1 M992.4 374.9h1.1 M1029.8 374.9h1.1 M1048.5 374.9h1.1 M1067.2 374.9h1.1 M1085.9 374.9h1.1 M1123.4 374.9h1.1 M1142.1 374.9h1.1 M1160.8 374.9h1.1 M1179.5 374.9h1.1 M1216.9 374.9h1.1 M1235.6 374.9h1.1 M1254.4 374.9h1.1 M1273.1 374.9h1.1 M599.4 402.3h1.1 M618.1 402.3h1.1 M655.5 402.3h1.1 M674.2 402.3h1.1 M692.9 402.3h1.1 M711.7 402.3h1.1 M749.1 402.3h1.1 M767.8 402.3h1.1 M786.5 402.3h1.1 M805.2 402.3h1.1 M842.7 402.3h1.1 M861.4 402.3h1.1 M880.1 402.3h1.1 M898.8 402.3h1.1 M936.2 402.3h1.1 M954.9 402.3h1.1 M973.7 402.3h1.1 M992.4 402.3h1.1 M1029.8 402.3h1.1 M1048.5 402.3h1.1 M1067.2 402.3h1.1 M1085.9 402.3h1.1 M1123.4 402.3h1.1 M1142.1 402.3h1.1 M1160.8 402.3h1.1 M1179.5 402.3h1.1 M1216.9 402.3h1.1 M1235.6 402.3h1.1 M1254.4 402.3h1.1 M1273.1 402.3h1.1" stroke="#4a4a4a" stroke-width="1.1" fill="none"/><rect x="598.6" y="271.4" width="935.6" height="1.3" fill="#666"/><rect x="598.6" y="401.0" width="935.6" height="1.3" fill="#666"/><path d="M1040 402H1143.5L1138.4 409.7L1134.3 405.2H1049.1L1045.1 409.7Z" fill="#d286c2"/><line x1="620" y1="258.7" x2="1534.2" y2="258.7" stroke="#a4a4a4" stroke-width="1" stroke-dasharray="3 2.6"/><line x1="617" y1="388.1" x2="1534.2" y2="388.1" stroke="#a4a4a4" stroke-width="1" stroke-dasharray="3 2.6"/><line x1="600" y1="466.2" x2="603" y2="466.2" stroke="#a4a4a4" stroke-width="1"/><line x1="634" y1="466.2" x2="1526" y2="466.2" stroke="#a4a4a4" stroke-width="1" stroke-dasharray="3 2.6"/><path d="M601 253.8 Q601 252.6 602.2 252.6 H613.6 L619.8 259.4 L613.6 266.2 H602.2 Q601 266.2 601 265 Z" fill="#161500" stroke="#a49c1c" stroke-width="1.2"/><path d="M601 382.8 Q601 381.6 602.2 381.6 H612.6 L618.4 388.1 L612.6 394.6 H602.2 Q601 394.6 601 393.4 Z" fill="#062626" stroke="#1c8c94" stroke-width="1.2"/><path d="M598.6 156.0 L614.7 156.0 L615.3 154.2 L616.0 156.0 L633.8 156.0 L634.4 154.2 L635.1 156.0 L647.8 156.0 L648.4 158.4 L649.1 156.0 L669.3 156.0 L669.9 154.8 L670.6 156.0 L690.4 156.0 L691.0 154.8 L691.7 156.0 L713.7 156.0 L714.3 154.2 L715.0 156.0 L729.6 156.0 L730.2 154.2 L730.9 156.0 L750.3 156.0 L750.9 154.8 L751.6 156.0 L773.0 156.0 L773.6 158.0 L774.3 156.0 L784.1 156.0 L784.7 158.0 L785.4 156.0 L808.0 156.0 L808.6 154.8 L809.3 156.0 L820.2 156.0 L820.6 257.2 L826.0 257.2 L826.6 198.0 Q827.3 166.0 828.2 158.5 Q828.6 156.0 829.4 156.0 L832.0 156.0 L832.5 257.2 L837.3 257.2 L837.9 198.0 Q838.6 166.0 839.5 158.5 Q839.9 156.0 840.7 156.0 L843.3 156.0 L843.8 257.2 L848.5 257.2 L849.1 198.0 Q849.8 166.0 850.7 158.5 Q851.1 156.0 851.9 156.0 L854.9 156.0 L855.4 257.2 L860.4 257.2 L861.0 198.0 Q861.7 166.0 862.6 158.5 Q863.0 156.0 863.8 156.0 L867.2 156.0 L867.7 257.2 L872.0 257.2 L872.6 198.0 Q873.3 166.0 874.2 158.5 Q874.6 156.0 875.4 156.0 L878.8 156.0 L879.3 257.2 L883.3 257.2 L883.9 198.0 Q884.6 166.0 885.5 158.5 Q885.9 156.0 886.7 156.0 L890.1 156.0 L890.6 257.2 L895.1 257.2 L895.7 198.0 Q896.4 166.0 897.3 158.5 Q897.7 156.0 898.5 156.0 L901.9 156.0 L902.4 257.2 L906.8 257.2 L907.4 198.0 Q908.1 166.0 909.0 158.5 Q909.4 156.0 910.2 156.0 L913.6 156.0 L914.1 257.2 L918.1 257.2 L918.7 198.0 Q919.4 166.0 920.3 158.5 Q920.7 156.0 921.5 156.0 L925.1 156.0 L925.6 257.2 L934.8 257.2 L935.4 198.0 Q936.1 166.0 937.0 158.5 Q937.4 156.0 938.2 156.0 L942.2 156.0 L942.7 257.2 L946.7 257.2 L947.3 198.0 Q948.0 166.0 948.9 158.5 Q949.3 156.0 950.1 156.0 L953.5 156.0 L954.0 257.2 L958.9 257.2 L959.5 198.0 Q960.2 166.0 961.1 158.5 Q961.5 156.0 962.3 156.0 L965.3 156.0 L965.8 257.2 L970.2 257.2 L970.8 198.0 Q971.5 166.0 972.4 158.5 Q972.8 156.0 973.6 156.0 L977.0 156.0 L977.5 257.2 L982.5 257.2 L983.1 198.0 Q983.8 166.0 984.7 158.5 Q985.1 156.0 985.9 156.0 L988.9 156.0 L989.4 257.2 L993.8 257.2 L994.4 198.0 Q995.1 166.0 996.0 158.5 Q996.4 156.0 997.2 156.0 L1000.6 156.0 L1001.1 257.2 L1005.6 257.2 L1006.2 198.0 Q1006.9 166.0 1007.8 158.5 Q1008.2 156.0 1009.0 156.0 L1012.4 156.0 L1012.9 257.2 L1016.7 257.2 L1017.3 198.0 Q1018.0 166.0 1018.9 158.5 Q1019.3 156.0 1020.1 156.0 L1023.7 156.0 L1024.2 257.2 L1028.5 257.2 L1029.1 198.0 Q1029.8 166.0 1030.7 158.5 Q1031.1 156.0 1031.9 156.0 L1035.3 156.0 L1035.8 257.2 L1043.9 257.2 L1044.5 198.0 Q1045.2 166.0 1046.1 158.5 Q1046.5 156.0 1047.3 156.0 L1050.3 156.0 L1050.8 257.2 L1055.1 257.2 L1055.7 198.0 Q1056.4 166.0 1057.3 158.5 Q1057.7 156.0 1058.5 156.0 L1061.9 156.0 L1062.4 257.2 L1067.4 257.2 L1068.0 198.0 Q1068.7 166.0 1069.6 158.5 Q1070.0 156.0 1070.8 156.0 L1074.2 156.0 L1074.7 257.2 L1078.6 257.2 L1079.2 198.0 Q1079.9 166.0 1080.8 158.5 Q1081.2 156.0 1082.0 156.0 L1085.6 156.0 L1086.1 257.2 L1090.9 257.2 L1091.5 198.0 Q1092.2 166.0 1093.1 158.5 Q1093.5 156.0 1094.3 156.0 L1097.3 156.0 L1097.8 257.2 L1102.1 257.2 L1102.7 198.0 Q1103.4 166.0 1104.3 158.5 Q1104.7 156.0 1105.5 156.0 L1109.0 156.0 L1109.5 257.2 L1114.0 257.2 L1114.6 198.0 Q1115.3 166.0 1116.2 158.5 Q1116.6 156.0 1117.4 156.0 L1120.8 156.0 L1121.3 257.2 L1125.7 257.2 L1126.3 198.0 Q1127.0 166.0 1127.9 158.5 Q1128.3 156.0 1129.1 156.0 L1132.5 156.0 L1133.0 257.2 L1137.3 257.2 L1137.9 198.0 Q1138.6 166.0 1139.5 158.5 Q1139.9 156.0 1140.7 156.0 L1144.3 156.0 L1144.8 257.2 L1153.2 257.2 L1153.8 198.0 Q1154.5 166.0 1155.4 158.5 Q1155.8 156.0 1156.6 156.0 L1169.1 156.0 L1169.7 154.8 L1170.4 156.0 L1183.3 156.0 L1183.9 158.4 L1184.6 156.0 L1194.9 156.0 L1195.5 154.2 L1196.2 156.0 L1210.0 156.0 L1210.6 154.2 L1211.3 156.0 L1222.1 156.0 L1222.7 158.0 L1223.4 156.0 L1242.3 156.0 L1242.9 158.0 L1243.6 156.0 L1264.8 156.0 L1265.4 154.8 L1266.1 156.0 L1272.1 156.0 L1272.7 154.8 L1273.4 156.0 L1294.6 156.0 L1295.2 154.2 L1295.9 156.0 L1306.9 156.0 L1307.5 158.0 L1308.2 156.0 L1317.0 156.0 L1317.6 158.0 L1318.3 156.0 L1334.0 156.0 L1334.6 157.5 L1335.3 156.0 L1353.2 156.0 L1353.8 157.5 L1354.5 156.0 L1368.9 156.0 L1369.5 154.8 L1370.2 156.0 L1379.0 156.0 L1379.6 158.4 L1380.3 156.0 L1392.8 156.0 L1393.4 158.4 L1394.1 156.0 L1410.5 156.0 L1411.1 157.5 L1411.8 156.0 L1425.6 156.0 L1426.2 158.4 L1426.9 156.0 L1440.9 156.0 L1441.5 154.8 L1442.2 156.0 L1463.4 156.0 L1464.0 158.4 L1464.7 156.0 L1481.7 156.0 L1482.3 154.2 L1483.0 156.0 L1496.9 156.0 L1497.5 158.0 L1498.2 156.0 L1510.6 156.0 L1511.2 158.0 L1511.9 156.0 L1535.0 156.0" stroke="#d2bc16" stroke-width="1.2" fill="none" stroke-linejoin="round"/><path d="M598.6 284.5 L814.7 284.5 L815.0 382.2 L823.5 383.5 L824.5 314.5 L825.5 289.5 Q825.9 285.3 826.9 286.0 L835.2 286.7 L835.5 382.2 L846.6 383.5 L847.6 314.5 L848.6 289.5 Q849.0 285.3 850.0 286.0 L858.7 286.7 L859.0 382.2 L905.3 384.4 L906.3 314.5 L907.3 289.5 Q907.7 285.3 908.7 286.0 L914.5 286.7 L914.8 382.2 L965.2 384.4 L966.2 314.5 L967.2 289.5 Q967.6 285.3 968.6 286.0 L977.5 286.7 L977.8 382.2 L989.2 383.5 L990.2 314.5 L991.2 289.5 Q991.6 285.3 992.6 286.0 L1000.9 286.7 L1001.2 382.2 L1024.6 384.4 L1025.6 314.5 L1026.6 289.5 Q1027.0 285.3 1028.0 286.0 L1027.0 286.7 L1027.3 382.2 L1074.5 384.4 L1075.5 314.5 L1076.5 289.5 Q1076.9 285.3 1077.9 286.0 L1086.3 286.7 L1086.6 382.2 L1098.2 383.5 L1099.2 314.5 L1100.2 289.5 Q1100.6 285.3 1101.6 286.0 L1121.1 286.7 L1121.4 382.2 L1133.0 383.5 L1134.0 314.5 L1135.0 289.5 Q1135.4 285.3 1136.4 286.0 L1150.8 286.7 L1151.1 382.2 L1160.0 383.5 L1161.0 314.5 L1162.0 289.5 Q1162.4 285.3 1163.4 286.0 L1300 284.0 L1535 283.3" stroke="#1aa8b8" stroke-width="1.2" fill="none" stroke-linejoin="round"/><line x1="619" y1="440.2" x2="1534.2" y2="440.2" stroke="#f21cf0" stroke-width="2.8"/><path d="M600.8 434 H612.4 L619.2 440.2 L612.4 446.6 H600.8 Z" fill="#cc94f4"/><rect x="626" y="435.5" width="20.2" height="9.7" fill="#2c2c2c" stroke="#4c4c4c" stroke-width="0.7"/><path d="M632.5 440.3h7" stroke="#b070c0" stroke-width="1.2"/><path d="M826.4 440.2 L829.3 434.4 H916.7 L919.6 440.2 L916.7 446 H829.3 Z" fill="#000" stroke="#a4960c" stroke-width="1.3"/><path d="M936.0 440.2 L938.9 434.4 H1027.0 L1029.9 440.2 L1027.0 446 H938.9 Z" fill="#000" stroke="#0e6c6c" stroke-width="1.3"/><path d="M1044.8 440.2 L1047.7 434.4 H1135.3999999999999 L1138.3 440.2 L1135.3999999999999 446 H1047.7 Z" fill="#000" stroke="#0e6c6c" stroke-width="1.3"/><path d="M814.3 435.2V446" stroke="#20a040" stroke-width="1"/><path d="M1159.6 435V446.3" stroke="#c01414" stroke-width="1.1"/><path d="M598.6 456.4H819.8 M826.7 456.4H831.9 M838.0 456.4H843.2 M849.2 456.4H854.8 M861.1 456.4H867.1 M872.7 456.4H878.7 M884.0 456.4H890.0 M895.8 456.4H901.8 M907.5 456.4H913.5 M918.8 456.4H925.0 M935.5 456.4H942.1 M947.4 456.4H953.4 M959.6 456.4H965.2 M970.9 456.4H976.9 M983.2 456.4H988.8 M994.5 456.4H1000.5 M1006.3 456.4H1012.3 M1017.4 456.4H1023.6 M1029.2 456.4H1035.2 M1044.6 456.4H1050.2 M1055.8 456.4H1061.8 M1068.1 456.4H1074.1 M1079.3 456.4H1085.5 M1091.6 456.4H1097.2 M1102.8 456.4H1108.9 M1114.7 456.4H1120.7 M1126.4 456.4H1132.4 M1138.0 456.4H1144.2 M1153.4 456.4H1534.2" stroke="#167816" stroke-width="1.1" fill="none"/><path d="M819.8 474.8H826.7 M831.9 474.8H838.0 M843.2 474.8H849.2 M854.8 474.8H861.1 M867.1 474.8H872.7 M878.7 474.8H884.0 M890.0 474.8H895.8 M901.8 474.8H907.5 M913.5 474.8H918.8 M925.0 474.8H935.5 M942.1 474.8H947.4 M953.4 474.8H959.6 M965.2 474.8H970.9 M976.9 474.8H983.2 M988.8 474.8H994.5 M1000.5 474.8H1006.3 M1012.3 474.8H1017.4 M1023.6 474.8H1029.2 M1035.2 474.8H1044.6 M1050.2 474.8H1055.8 M1061.8 474.8H1068.1 M1074.1 474.8H1079.3 M1085.5 474.8H1091.6 M1097.2 474.8H1102.8 M1108.9 474.8H1114.7 M1120.7 474.8H1126.4 M1132.4 474.8H1138.0 M1144.2 474.8H1153.4" stroke="#1a1aa0" stroke-width="1.4" fill="none"/><path d="M819.8 456.4V474.8 M826.7 456.4V474.8 M831.9 456.4V474.8 M838.0 456.4V474.8 M843.2 456.4V474.8 M849.2 456.4V474.8 M854.8 456.4V474.8 M861.1 456.4V474.8 M867.1 456.4V474.8 M872.7 456.4V474.8 M878.7 456.4V474.8 M884.0 456.4V474.8 M890.0 456.4V474.8 M895.8 456.4V474.8 M901.8 456.4V474.8 M907.5 456.4V474.8 M913.5 456.4V474.8 M918.8 456.4V474.8 M925.0 456.4V474.8 M935.5 456.4V474.8 M942.1 456.4V474.8 M947.4 456.4V474.8 M953.4 456.4V474.8 M959.6 456.4V474.8 M965.2 456.4V474.8 M970.9 456.4V474.8 M976.9 456.4V474.8 M983.2 456.4V474.8 M988.8 456.4V474.8 M994.5 456.4V474.8 M1000.5 456.4V474.8 M1006.3 456.4V474.8 M1012.3 456.4V474.8 M1017.4 456.4V474.8 M1023.6 456.4V474.8 M1029.2 456.4V474.8 M1035.2 456.4V474.8 M1044.6 456.4V474.8 M1050.2 456.4V474.8 M1055.8 456.4V474.8 M1061.8 456.4V474.8 M1068.1 456.4V474.8 M1074.1 456.4V474.8 M1079.3 456.4V474.8 M1085.5 456.4V474.8 M1091.6 456.4V474.8 M1097.2 456.4V474.8 M1102.8 456.4V474.8 M1108.9 456.4V474.8 M1114.7 456.4V474.8 M1120.7 456.4V474.8 M1126.4 456.4V474.8 M1132.4 456.4V474.8 M1138.0 456.4V474.8 M1144.2 456.4V474.8 M1153.4 456.4V474.8" stroke="#a4a4a4" stroke-width="1.0" fill="none"/><path d="M598.6 480.5H813.5 M823.1 480.5H834.0 M846.2 480.5H857.5 M904.9 480.5H913.3 M964.8 480.5H976.3 M988.8 480.5H999.7 M1024.2 480.5H1025.8 M1074.1 480.5H1085.1 M1097.8 480.5H1119.9 M1132.6 480.5H1149.6 M1159.6 480.5H1534.2" stroke="#167816" stroke-width="1.1" fill="none"/><path d="M813.5 499.3H823.1 M834.0 499.3H846.2 M857.5 499.3H904.9 M913.3 499.3H964.8 M976.3 499.3H988.8 M999.7 499.3H1024.2 M1025.8 499.3H1074.1 M1085.1 499.3H1097.8 M1119.9 499.3H1132.6 M1149.6 499.3H1159.6" stroke="#1a1aa0" stroke-width="1.4" fill="none"/><path d="M813.5 480.5V499.3 M823.1 480.5V499.3 M834.0 480.5V499.3 M846.2 480.5V499.3 M857.5 480.5V499.3 M904.9 480.5V499.3 M913.3 480.5V499.3 M964.8 480.5V499.3 M976.3 480.5V499.3 M988.8 480.5V499.3 M999.7 480.5V499.3 M1024.2 480.5V499.3 M1025.8 480.5V499.3 M1074.1 480.5V499.3 M1085.1 480.5V499.3 M1097.8 480.5V499.3 M1119.9 480.5V499.3 M1132.6 480.5V499.3 M1149.6 480.5V499.3 M1159.6 480.5V499.3" stroke="#a4a4a4" stroke-width="1.0" fill="none"/><rect x="598.6" y="530.7" width="936.1" height="1.3" fill="#34c434"/><rect x="1533.8" y="423" width="1.3" height="108" fill="#9c9c9c"/><rect x="597" y="532.0" width="938.5" height="1.8" fill="#b4b4b4"/></svg>
<div class="t k" style="left:607.80px;top:3.00px;font-size:9px;color:#d8d8d8;font-weight:bold;transform:scaleX(0.8313)">File</div>
<div class="t k" style="left:643.10px;top:3.00px;font-size:9px;color:#d8d8d8;font-weight:bold;transform:scaleX(0.8941)">Edit</div>
<div class="t k" style="left:679.90px;top:3.00px;font-size:9px;color:#d8d8d8;font-weight:bold;transform:scaleX(0.9600)">Utility</div>
<div class="t k" style="left:725.90px;top:3.00px;font-size:9px;color:#d8d8d8;font-weight:bold;transform:scaleX(0.9050)">Help</div>
<div class="t k" style="left:605.90px;top:19.20px;font-size:8.5px;color:#d4d4d4;transform:scaleX(1.0627)">Waveform View</div>
<div class="t k" style="left:678.50px;top:121.40px;font-size:7px;color:#c4c4c4">-1.20 ms</div>
<div class="t k" style="left:773.95px;top:121.40px;font-size:7px;color:#c4c4c4">-800 µs</div>
<div class="t k" style="left:867.40px;top:121.40px;font-size:7px;color:#c4c4c4">-400 µs</div>
<div class="t k" style="left:967.85px;top:121.40px;font-size:7px;color:#c4c4c4">0 s</div>
<div class="t k" style="left:1055.30px;top:121.40px;font-size:7px;color:#c4c4c4">400 µs</div>
<div class="t k" style="left:1148.75px;top:121.40px;font-size:7px;color:#c4c4c4">800 µs</div>
<div class="t k" style="left:1240.20px;top:121.40px;font-size:7px;color:#c4c4c4">1.20 ms</div>
<div class="t k" style="left:605.90px;top:132.70px;font-size:7px;color:#181818;transform:scaleX(1.0141)">Horizontal Zoom Scale</div>
<div class="t k" style="left:689.70px;top:132.70px;font-size:7px;color:#202020;transform:scaleX(0.9921)">40.00 us/div</div>
<div class="t k" style="left:796.00px;top:132.70px;font-size:7px;color:#181818;transform:scaleX(1.0111)">(10.00x zoom)</div>
<div class="t k" style="left:852.60px;top:132.70px;font-size:7px;color:#181818;transform:scaleX(1.0372)">Vertical Zoom</div>
<div class="t k" style="left:959.40px;top:132.70px;font-size:7px;color:#181818;transform:scaleX(1.0146)">(1.00x zoom)</div>
<div class="t k" style="left:606.00px;top:256.90px;font-size:6.5px;color:#b4aa20;font-weight:bold">C1</div>
<div class="t k" style="left:604.60px;top:385.90px;font-size:5.5px;color:#1c8c94;font-weight:bold">C2</div>
<div class="t k" style="left:606.00px;top:438.30px;font-size:5px;color:#7a4ca0">B1</div>
<div class="t k" style="left:624.90px;top:423.70px;font-size:9.5px;color:#a874dc">I2C</div>
<div class="t k" style="left:838.00px;top:436.30px;font-size:10px;color:#f2f2f2;font-weight:bold;transform:scale(0.9831,0.9625)">Addr:50h:Read</div>
<div class="t k" style="left:961.70px;top:436.30px;font-size:10px;color:#f2f2f2;font-weight:bold;transform:scale(0.9952,0.9625)">Data:14h</div>
<div class="t k" style="left:1070.30px;top:436.30px;font-size:10px;color:#f2f2f2;font-weight:bold;transform:scale(0.9929,0.9625)">Data:16h</div>
<div class="t k" style="left:603.35px;top:458.98px;font-size:12px;color:#f0f0f0;transform:scale(0.9467,1.0222)">SCLK</div>
<div class="t k" style="left:603.29px;top:483.20px;font-size:12px;color:#f0f0f0;transform:scaleX(1.0083)">SDA</div>
<div class="t k" style="left:625.80px;top:521.90px;font-size:7px;color:#a8a8a8">840 µs</div>
<div class="t k" style="left:719.37px;top:521.90px;font-size:7px;color:#a8a8a8">880 µs</div>
<div class="t k" style="left:812.94px;top:521.90px;font-size:7px;color:#a8a8a8">920 µs</div>
<div class="t k" style="left:906.51px;top:521.90px;font-size:7px;color:#a8a8a8">960 µs</div>
<div class="t k" style="left:1003.08px;top:521.90px;font-size:7px;color:#a8a8a8">1 ms</div>
<div class="t k" style="left:1091.65px;top:521.90px;font-size:7px;color:#a8a8a8">1.04 ms</div>
<div class="t k" style="left:1185.22px;top:521.90px;font-size:7px;color:#a8a8a8">1.08 ms</div>
<div class="t k" style="left:1278.79px;top:521.90px;font-size:7px;color:#a8a8a8">1.12 ms</div>
<div class="t k" style="left:1372.36px;top:521.90px;font-size:7px;color:#a8a8a8">1.16 ms</div>
<div class="t k" style="left:1465.93px;top:521.90px;font-size:7px;color:#a8a8a8">1.20 ms</div>
<svg width="1633" height="587" viewBox="0 0 1633 587"><rect x="1282" y="1" width="253.5" height="22.8" fill="#56565a"/><rect x="1282" y="23.8" width="253.5" height="399.6" fill="rgb(136,136,136)" opacity="0.86"/><path d="M1522.5 133.5l7 7M1529.5 133.5l-7 7" stroke="#9a9a9a" stroke-width="1.1"/><circle cx="1518" cy="12.8" r="6.8" fill="none" stroke="#bcbcbc" stroke-width="1.3"/><rect x="1289.8" y="46.5" width="25.2" height="18.5" rx="2" fill="#20b4e8"/><rect x="1314.8" y="46.5" width="10.6" height="18.5" rx="2.5" fill="#dadada"/><rect x="1287.8" y="72.4" width="242" height="1.1" fill="#262626"/><rect x="1289.7" y="92.7" width="81.2" height="18.4" fill="#d6d6d6"/><path d="M1361.4 100.3 h4.6 l-2.3 3.4z" fill="#8a8a8a"/><rect x="1391" y="92.7" width="81.0" height="18.4" fill="#d6d6d6"/><path d="M1462.5 100.3 h4.6 l-2.3 3.4z" fill="#8a8a8a"/><rect x="1289.7" y="129.5" width="81.2" height="18.4" fill="#d6d6d6"/><path d="M1361.4 137.1 h4.6 l-2.3 3.4z" fill="#8a8a8a"/><rect x="1534.3" y="24" width="1.3" height="399.4" fill="#a4a4a4"/><rect x="1290" y="233.5" width="59.3" height="18.4" rx="2" fill="#d4d4d4"/><rect x="1363.2" y="232.2" width="166" height="41" rx="3" fill="#b6b6b6" stroke="#58bcdc" stroke-width="2.2"/><rect x="1484" y="233.3" width="44.2" height="37.9" fill="#f6f6f6"/><rect x="1483.4" y="233.3" width="1" height="37.9" fill="#58bcdc"/><rect x="1486.2" y="246.1" width="10" height="9.6" fill="#3a7cc8"/><circle cx="1367.1" cy="280.9" r="4.3" fill="#3c8ee0"/><circle cx="1367.1" cy="292.5" r="4.3" fill="#3c8ee0"/><rect x="1287.4" y="388.1" width="242.5" height="1.1" fill="#3a3a3a"/><rect x="1289.7" y="397" width="75.9" height="18.9" rx="2.5" fill="#d2d2d2"/><rect x="1451.9" y="397" width="75.9" height="18.9" rx="2.5" fill="#d2d2d2"/><rect x="1535.6" y="1" width="88.2" height="531" fill="#2c2c2c"/><rect x="1535.6" y="1" width="8" height="531" fill="#272727"/><rect x="1543.8" y="14.6" width="80" height="517.4" fill="none" stroke="#454545" stroke-width="0.9"/><path d="M1539.2 269.2v0.1M1539.2 274v0.1M1539.2 278.8v0.1" stroke="#e8e8e8" stroke-width="2.1" stroke-linecap="round"/><rect x="1546.9" y="29.2" width="34.2" height="19.1" rx="2.8" fill="#262626" stroke="#4c4842" stroke-width="1"/><rect x="1584.8" y="29.2" width="34.1" height="19.1" rx="2.8" fill="#262626" stroke="#4c4842" stroke-width="1"/><rect x="1546.9" y="53.2" width="34.2" height="18.9" rx="2.8" fill="#262626" stroke="#4c4842" stroke-width="1"/><rect x="1584.8" y="53.2" width="34.1" height="18.9" rx="2.8" fill="#262626" stroke="#4c4842" stroke-width="1"/><rect x="1546.9" y="77.4" width="34.2" height="19.2" rx="2.8" fill="#262626" stroke="#4c4842" stroke-width="1"/><rect x="1584.8" y="77.4" width="34.1" height="19.2" rx="2.8" fill="#262626" stroke="#4c4842" stroke-width="1"/><rect x="1544.3" y="101.2" width="79" height="0.9" fill="#4c4c4c"/><rect x="1545.3" y="107.7" width="77.5" height="9.4" fill="#5c5c5c"/><path d="M1545.3 117.1H1622.8V137.5Q1622.8 139.5 1620.8 139.5H1547.3Q1545.3 139.5 1545.3 137.5Z" fill="#cbcbcb"/><path d="M1535.8 113 L1544.6 124 L1535.8 134.5 Z" fill="#707070"/><rect x="1608.2" y="109.6" width="11.5" height="5.7" rx="2.5" fill="#4c4c4c" stroke="#3a3a3a" stroke-width="0.6"/><rect x="1544.3" y="504.6" width="79" height="0.9" fill="#4c4c4c"/><rect x="1547" y="510.4" width="33.5" height="19.4" rx="2.8" fill="#262626" stroke="#4c4842" stroke-width="1"/><path d="M1557.3 514.2h8.4M1557.3 514.2v7.4h3" stroke="#c4c4c4" stroke-width="0.9" stroke-dasharray="1.1 1.1" fill="none"/><circle cx="1564.4" cy="521.2" r="3.2" fill="#3a3a3a" stroke="#c0c0c0" stroke-width="1.3"/><path d="M1566.6 523.4l3.6 3.4" stroke="#b8b8b8" stroke-width="2"/><path d="M1597.2 514.6l1.6 12.6q0.3 1.6 1.9 1.6h6.6q1.6 0 1.9-1.6l1.6-12.6" stroke="#c8c8c8" stroke-width="1.1" fill="#2c2c2c"/><ellipse cx="1604" cy="514.3" rx="7" ry="2.4" fill="#3a3a3a" stroke="#c8c8c8" stroke-width="1.1"/><path d="M1601 517.5v9.8M1604 517.5v10.2M1607 517.5v9.8" stroke="#9a9a9a" stroke-width="1.2"/><rect x="597" y="533.8" width="1027" height="44.7" fill="#2b2b2b"/><path d="M598.5 537 Q598.5 535.1 600.3 535.1 H645.0 Q646.8 535.1 646.8 537 V577.7 H598.5 Z" fill="#cdcdcd"/><path d="M598.5 537 Q598.5 535.1 600.3 535.1 H645.0 Q646.8 535.1 646.8 537 V544.7 H598.5 Z" fill="#534c22"/><path d="M649.1 537 Q649.1 535.1 650.9 535.1 H695.5 Q697.3 535.1 697.3 537 V577.7 H649.1 Z" fill="#cdcdcd"/><path d="M649.1 537 Q649.1 535.1 650.9 535.1 H695.5 Q697.3 535.1 697.3 537 V544.7 H649.1 Z" fill="#1c4444"/><path d="M700.6 537 Q700.6 535.1 702.4 535.1 H746.4000000000001 Q748.2 535.1 748.2 537 V577.7 H700.6 Z" fill="#cdcdcd"/><path d="M700.6 537 Q700.6 535.1 702.4 535.1 H746.4000000000001 Q748.2 535.1 748.2 537 V544.7 H700.6 Z" fill="#c894f0"/><path d="M603.3 563.2a3.4 3.4 0 0 1 6.8 0" stroke="#5a5a5a" stroke-width="0.9" fill="none"/><circle cx="604.1" cy="563.6" r="1.5" fill="none" stroke="#6a6a6a" stroke-width="0.7"/><circle cx="608.9" cy="563.6" r="1.5" fill="none" stroke="#6a6a6a" stroke-width="0.7"/><path d="M639.0 568.5v3.6h1.6M641.1 571.6l2.8 1.6" stroke="#333" stroke-width="1.2" fill="none"/><path d="M653.9 563.2a3.4 3.4 0 0 1 6.8 0" stroke="#5a5a5a" stroke-width="0.9" fill="none"/><circle cx="654.7" cy="563.6" r="1.5" fill="none" stroke="#6a6a6a" stroke-width="0.7"/><circle cx="659.5" cy="563.6" r="1.5" fill="none" stroke="#6a6a6a" stroke-width="0.7"/><path d="M689.6 568.5v3.6h1.6M691.7 571.6l2.8 1.6" stroke="#333" stroke-width="1.2" fill="none"/><rect x="1000.4" y="535.5" width="20.6" height="41.9" rx="2.6" fill="#2e2e2e" stroke="#4a4640" stroke-width="0.9"/><rect x="1003.0" y="539.1" width="15.4" height="1.7" fill="#cc3c4c"/><rect x="1024.7" y="535.5" width="20.6" height="41.9" rx="2.6" fill="#2e2e2e" stroke="#4a4640" stroke-width="0.9"/><rect x="1027.3" y="539.1" width="15.4" height="1.7" fill="#8cbc2c"/><rect x="1048.9" y="535.5" width="20.6" height="41.9" rx="2.6" fill="#2e2e2e" stroke="#4a4640" stroke-width="0.9"/><rect x="1051.5" y="539.1" width="15.4" height="1.7" fill="#dc8c2c"/><rect x="1073.1" y="535.5" width="20.6" height="41.9" rx="2.6" fill="#2e2e2e" stroke="#4a4640" stroke-width="0.9"/><rect x="1075.7" y="539.1" width="15.4" height="1.7" fill="#2c2ca4"/><rect x="1097.2" y="535.5" width="20.6" height="41.9" rx="2.6" fill="#2e2e2e" stroke="#4a4640" stroke-width="0.9"/><rect x="1099.8" y="539.1" width="15.4" height="1.7" fill="#c44ca4"/><rect x="1121.2" y="535.5" width="20.6" height="41.9" rx="2.6" fill="#2e2e2e" stroke="#4a4640" stroke-width="0.9"/><rect x="1123.8" y="539.1" width="15.4" height="1.7" fill="#1cb484"/><rect x="1147.3" y="535" width="0.9" height="43" fill="#464646"/><rect x="1153.6" y="535.5" width="20.6" height="41.9" rx="2.6" fill="#2e2e2e" stroke="#4a4640" stroke-width="0.9"/><rect x="1156.2" y="539.1" width="15.4" height="1.7" fill="#d48c2c"/><rect x="1177.6" y="535.5" width="20.6" height="41.9" rx="2.6" fill="#2e2e2e" stroke="#4a4640" stroke-width="0.9"/><rect x="1180.2" y="539.1" width="15.4" height="1.7" fill="#acacac"/><rect x="1201.6" y="535.5" width="20.6" height="41.9" rx="2.6" fill="#2e2e2e" stroke="#4a4640" stroke-width="0.9"/><rect x="1204.2" y="539.1" width="15.4" height="1.7" fill="#a454d4"/><rect x="1228.8" y="535" width="0.9" height="43" fill="#464646"/><rect x="1234.4" y="535.5" width="20.6" height="41.9" rx="2.6" fill="#2e2e2e" stroke="#4a4640" stroke-width="0.9"/><rect x="1237.0" y="539.1" width="15.4" height="1.7" fill="#444444"/><rect x="1261.4" y="535.5" width="20.6" height="41.9" rx="2.6" fill="#2e2e2e" stroke="#4a4640" stroke-width="0.9"/><rect x="1264.0" y="539.1" width="15.4" height="1.7" fill="#444444"/><rect x="1286.2" y="535" width="0.9" height="43" fill="#464646"/><path d="M1293.5 537 Q1293.5 535 1295.3 535 H1390.2 Q1392 535 1392 537 V577.8 H1293.5 Z" fill="#cbcbcb"/><path d="M1293.5 537 Q1293.5 535 1295.3 535 H1390.2 Q1392 535 1392 537 V545 H1293.5 Z" fill="#5e5e5e"/><path d="M1354.2 568.8h4.2v3.2l-2.1 2.2l-2.1-2.2z" fill="#d07a1c"/><path d="M1355.6 570v2.2M1357 570v2.2" stroke="#3a2a10" stroke-width="0.5"/><path d="M1398 537 Q1398 535 1399.8 535 H1481.4 Q1483.2 535 1483.2 537 V577.8 H1398 Z" fill="#cbcbcb"/><path d="M1398 537 Q1398 535 1399.8 535 H1481.4 Q1483.2 535 1483.2 537 V545 H1398 Z" fill="#5e5e5e"/><rect x="1401.7" y="548" width="15.8" height="8.7" rx="2.8" fill="#cc94f4" stroke="#2a2a2a" stroke-width="0.9"/><path d="M1488.6 537 Q1488.6 535 1490.3999999999999 535 H1567.0 Q1568.8 535 1568.8 537 V577.8 H1488.6 Z" fill="#cbcbcb"/><path d="M1488.6 537 Q1488.6 535 1490.3999999999999 535 H1567.0 Q1568.8 535 1568.8 537 V545 H1488.6 Z" fill="#5e5e5e"/><rect x="1576" y="535" width="44.2" height="19.5" rx="2.2" fill="#ec1c2c"/></svg>
<div class="t k" style="left:1287.70px;top:6.90px;font-size:9.5px;color:#dedede;transform:scaleX(0.8426)">SEARCH 1</div>
<div class="t k" style="left:1514.60px;top:7.80px;font-size:10.5px;color:#c4c4c4;font-weight:bold">?</div>
<div class="t k" style="left:1287.70px;top:36.40px;font-size:9px;color:#181818;transform:scaleX(0.8767)">Display</div>
<div class="t k" style="left:1296.90px;top:52.10px;font-size:8.5px;color:#0c2c48;transform:scaleX(0.9727)">On</div>
<div class="t k" style="left:1287.80px;top:82.30px;font-size:9px;color:#181818;transform:scaleX(0.8640)">Search Type</div>
<div class="t k" style="left:1389.60px;top:81.30px;font-size:9px;color:#181818;transform:scaleX(0.8643)">Source</div>
<div class="t k" style="left:1287.80px;top:119.30px;font-size:9px;color:#181818;transform:scaleX(0.9457)">Mark When</div>
<div class="t k" style="left:1292.00px;top:97.40px;font-size:9px;color:#1c1c1c;transform:scaleX(0.7938)">Bus</div>
<div class="t k" style="left:1393.60px;top:98.40px;font-size:9px;color:#1c1c1c;transform:scaleX(0.8400)">Bus1 (I2C )</div>
<div class="t k" style="left:1292.00px;top:134.10px;font-size:9px;color:#1c1c1c;transform:scaleX(0.9105)">Data</div>
<div class="t k" style="left:1514.00px;top:152.00px;font-size:7px;color:#8c8a76">6.00</div>
<div class="t k" style="left:1514.00px;top:164.85px;font-size:7px;color:#8c8a76">4.20</div>
<div class="t k" style="left:1514.00px;top:177.70px;font-size:7px;color:#8c8a76">3.60</div>
<div class="t k" style="left:1524.00px;top:190.55px;font-size:7px;color:#8c8a76">3</div>
<div class="t k" style="left:1514.00px;top:203.40px;font-size:7px;color:#8c8a76">2.40</div>
<div class="t k" style="left:1514.00px;top:216.25px;font-size:7px;color:#8c8a76">1.80</div>
<div class="t k" style="left:1514.00px;top:281.00px;font-size:7px;color:#7f8889">4.80</div>
<div class="t k" style="left:1514.00px;top:293.85px;font-size:7px;color:#7f8889">4.20</div>
<div class="t k" style="left:1514.00px;top:306.70px;font-size:7px;color:#7f8889">3.60</div>
<div class="t k" style="left:1524.00px;top:319.55px;font-size:7px;color:#7f8889">3</div>
<div class="t k" style="left:1514.00px;top:332.40px;font-size:7px;color:#7f8889">2.40</div>
<div class="t k" style="left:1514.00px;top:345.25px;font-size:7px;color:#7f8889">1.80</div>
<div class="t k" style="left:1514.00px;top:358.10px;font-size:7px;color:#7f8889">1.20</div>
<div class="t k" style="left:1507.50px;top:370.95px;font-size:7px;color:#7f8889">600 m</div>
<div class="t k" style="left:1287.80px;top:222.40px;font-size:9px;color:#181818;transform:scaleX(0.8886)">Data Bytes</div>
<div class="t k" style="left:1362.70px;top:222.40px;font-size:9px;color:#181818;transform:scaleX(0.8947)">Data</div>
<div class="t k" style="left:1342.80px;top:237.90px;font-size:9px;color:#1c1c1c">1</div>
<div class="t k" style="left:1367.70px;top:235.70px;font-size:7px;color:#1c1c1c">Binary</div>
<div class="t k" style="left:1367.70px;top:247.10px;font-size:9px;color:#1c1c1c;font-family:'Liberation Mono',monospace;transform:scaleX(0.8937)">0001 0110</div>
<div class="t k" style="left:1486.60px;top:236.10px;font-size:7px;color:#1c1c1c;transform:scaleX(0.9538)">Hex</div>
<div class="t k" style="left:1486.60px;top:247.40px;font-size:8.5px;color:#f4f4f4;font-family:'Liberation Mono',monospace;transform:scaleX(0.9200)">16</div>
<div class="t k" style="left:1364.90px;top:278.70px;font-size:6.5px;color:#ffffff;font-weight:bold">A</div>
<div class="t k" style="left:1365.00px;top:290.30px;font-size:6.5px;color:#ffffff;font-weight:bold">B</div>
<div class="t k" style="left:1376.80px;top:277.60px;font-size:8.5px;color:#181818;transform:scaleX(0.9537)">selects digit(s)</div>
<div class="t k" style="left:1376.80px;top:289.10px;font-size:8.5px;color:#181818;transform:scaleX(0.9327)">sets its value</div>
<div class="t k" style="left:1303.90px;top:399.20px;font-size:8.5px;color:#1c1c1c;transform:scaleX(0.9612)">Copy Trigger</div>
<div class="t k" style="left:1294.30px;top:407.60px;font-size:8.5px;color:#1c1c1c;transform:scaleX(0.9667)">Settings to Search</div>
<div class="t k" style="left:1466.80px;top:399.20px;font-size:8.5px;color:#1c1c1c;transform:scaleX(0.9245)">Copy Search</div>
<div class="t k" style="left:1455.30px;top:407.60px;font-size:8.5px;color:#1c1c1c;transform:scaleX(0.9957)">Settings to Trigger</div>
<div class="t k" style="left:1563.00px;top:16.10px;font-size:9px;color:#f2f2f2;font-weight:bold;transform:scaleX(0.9000)">Add New...</div>
<div class="t k" style="left:1550.70px;top:35.00px;font-size:9px;color:#ececec;transform:scaleX(0.8406)">Cursors</div>
<div class="t k" style="left:1592.90px;top:35.00px;font-size:9px;color:#ececec;transform:scaleX(0.9421)">Note</div>
<div class="t k" style="left:1547.70px;top:58.80px;font-size:9px;color:#ececec;transform:scaleX(0.9286)">Measure</div>
<div class="t k" style="left:1589.00px;top:59.80px;font-size:9px;color:#ececec;transform:scaleX(0.9036)">Search</div>
<div class="t k" style="left:1551.50px;top:80.20px;font-size:8.5px;color:#ececec;transform:scaleX(0.8929)">Results</div>
<div class="t k" style="left:1554.60px;top:88.20px;font-size:8.5px;color:#ececec;transform:scaleX(0.9500)">Table</div>
<div class="t k" style="left:1594.00px;top:83.60px;font-size:9px;color:#ececec;transform:scaleX(0.9562)">Plot</div>
<div class="t k" style="left:1548.00px;top:108.20px;font-size:8px;color:#d2d2d2;transform:scaleX(0.9469)">Search 1</div>
<div class="t k" style="left:1549.60px;top:120.50px;font-size:8px;color:#1c1c1c;transform:scaleX(0.8714)">Bus</div>
<div class="t k" style="left:1549.60px;top:130.40px;font-size:8px;color:#1c1c1c;transform:scaleX(0.9515)">Events: 1</div>
<div class="t k" style="left:601.70px;top:536.20px;font-size:8px;color:#dccc30;transform:scaleX(0.9000)">Ch 1</div>
<div class="t k" style="left:652.30px;top:536.20px;font-size:8px;color:#34c0c8;transform:scaleX(0.9000)">Ch 2</div>
<div class="t k" style="left:703.60px;top:536.20px;font-size:8px;color:#3a2454;transform:scaleX(0.9450)">Bus 1</div>
<div class="t k" style="left:602.50px;top:548.20px;font-size:8px;color:#1e1e1e;transform:scaleX(1.0229)">600 m/div</div>
<div class="t k" style="left:602.50px;top:567.80px;font-size:8px;color:#1e1e1e;transform:scaleX(1.0407)">50 MHz</div>
<div class="t k" style="left:653.10px;top:548.20px;font-size:8px;color:#1e1e1e;transform:scaleX(1.0229)">600 m/div</div>
<div class="t k" style="left:653.10px;top:567.80px;font-size:8px;color:#1e1e1e;transform:scaleX(1.0407)">50 MHz</div>
<div class="t k" style="left:703.30px;top:548.20px;font-size:8px;color:#1e1e1e;transform:scaleX(1.0417)">I2C</div>
<div class="t k" style="left:1008.30px;top:551.30px;font-size:10px;color:#e8e8e8">3</div>
<div class="t k" style="left:1032.10px;top:551.30px;font-size:10px;color:#e8e8e8">4</div>
<div class="t k" style="left:1056.30px;top:551.30px;font-size:10px;color:#e8e8e8">5</div>
<div class="t k" style="left:1081.00px;top:551.30px;font-size:10px;color:#e8e8e8">6</div>
<div class="t k" style="left:1105.10px;top:551.30px;font-size:10px;color:#e8e8e8">7</div>
<div class="t k" style="left:1129.10px;top:551.30px;font-size:10px;color:#e8e8e8">8</div>
<div class="t k" style="left:1156.50px;top:545.90px;font-size:8.5px;color:#e8e8e8">Add</div>
<div class="t k" style="left:1155.50px;top:553.50px;font-size:8.5px;color:#e8e8e8">New</div>
<div class="t k" style="left:1154.97px;top:563.00px;font-size:8.5px;color:#e8e8e8;transform:scaleX(0.9500)">Math</div>
<div class="t k" style="left:1180.50px;top:545.90px;font-size:8.5px;color:#e8e8e8">Add</div>
<div class="t k" style="left:1179.50px;top:553.50px;font-size:8.5px;color:#e8e8e8">New</div>
<div class="t k" style="left:1181.50px;top:563.00px;font-size:8.5px;color:#e8e8e8">Ref</div>
<div class="t k" style="left:1204.50px;top:545.90px;font-size:8.5px;color:#e8e8e8">Add</div>
<div class="t k" style="left:1203.50px;top:553.50px;font-size:8.5px;color:#e8e8e8">New</div>
<div class="t k" style="left:1204.50px;top:562.00px;font-size:8.5px;color:#e8e8e8">Bus</div>
<div class="t k" style="left:1235.78px;top:553.20px;font-size:8.5px;color:#e8e8e8;transform:scaleX(0.9500)">DVM</div>
<div class="t k" style="left:1263.73px;top:553.20px;font-size:8.5px;color:#e8e8e8;transform:scaleX(0.9500)">AFG</div>
<div class="t k" style="left:1296.20px;top:537.00px;font-size:8.5px;color:#e2e2e2">Horizontal</div>
<div class="t k" style="left:1296.80px;top:548.30px;font-size:8px;color:#1e1e1e">400 µs/div</div>
<div class="t k" style="left:1353.90px;top:548.30px;font-size:8px;color:#1e1e1e">4 ms</div>
<div class="t k" style="left:1296.80px;top:558.45px;font-size:8px;color:#1e1e1e">SR: 125 MS/s</div>
<div class="t k" style="left:1353.90px;top:558.45px;font-size:8px;color:#1e1e1e">8 ns/pt</div>
<div class="t k" style="left:1296.80px;top:568.60px;font-size:8px;color:#1e1e1e">RL: 500 kpts</div>
<div class="t k" style="left:1363.80px;top:568.60px;font-size:8px;color:#1e1e1e">40%</div>
<div class="t k" style="left:1400.50px;top:537.00px;font-size:8.5px;color:#e2e2e2">Trigger</div>
<div class="t k" style="left:1405.10px;top:548.50px;font-size:8px;color:#1e1e1e">B1</div>
<div class="t k" style="left:1422.60px;top:548.30px;font-size:8px;color:#1e1e1e">I2C</div>
<div class="t k" style="left:1401.30px;top:558.40px;font-size:8px;color:#1e1e1e">Data</div>
<div class="t k" style="left:1491.00px;top:537.00px;font-size:8.5px;color:#e2e2e2">Acquisition</div>
<div class="t k" style="left:1491.60px;top:548.30px;font-size:8px;color:#1e1e1e">Auto,</div>
<div class="t k" style="left:1517.50px;top:548.30px;font-size:8px;color:#1e1e1e">Analyze</div>
<div class="t k" style="left:1491.60px;top:558.45px;font-size:8px;color:#1e1e1e">High Res: 16 bits</div>
<div class="t k" style="left:1491.60px;top:568.60px;font-size:8px;color:#1e1e1e">Single: 1/1</div>
<div class="t k" style="left:1583.60px;top:540.20px;font-size:7.5px;color:#ffffff;font-weight:bold">Preview</div>
</body></html>
